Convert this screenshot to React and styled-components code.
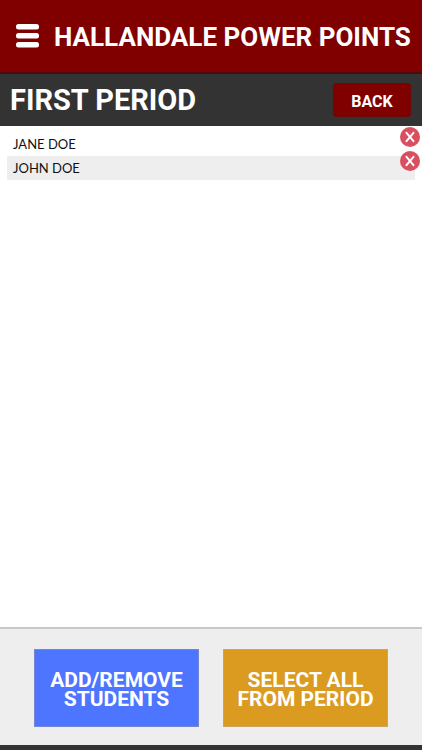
import React from "react";
import styled, { createGlobalStyle } from "styled-components";

const display = 'Roboto, sans-serif';

const GlobalStyle = createGlobalStyle`
  *, *::before, *::after { box-sizing: border-box; }
  body {
    margin: 0;
    background: #fff;
    color: #111;
    font-family: Lato, sans-serif;
  }
  button { margin: 0; cursor: pointer; }
`;

const Page = styled.div`
  display: flex;
  flex-direction: column;
  min-height: 100vh;
`;

const Header = styled.header`
  display: flex;
  align-items: center;
  gap: 14px;
  height: 74px;
  padding: 0 10px 0 16px;
  background: #800000;
  border-bottom: 2px solid #4c0c0c;
  color: #fff;
`;

const MenuButton = styled.button`
  display: flex;
  padding: 0;
  border: 0;
  background: none;
  color: inherit;
`;

const AppTitle = styled.h1`
  margin: 0;
  padding-top: 2px;
  font: bold 26px/36px ${display};
  white-space: nowrap;
`;

const PeriodBar = styled.div`
  display: flex;
  align-items: center;
  justify-content: space-between;
  height: 52px;
  padding: 0 11px 0 10px;
  background: #333;
  color: #fff;
`;

const PeriodTitle = styled.h2`
  margin: 0;
  font: bold 29px/40px ${display};
  white-space: nowrap;
`;

const BackButton = styled.button`
  width: 78px;
  height: 34px;
  padding: 3px 0 0;
  border: 1px solid #6c0808;
  border-radius: 3px;
  background: #800000;
  color: #fff;
  font: bold 16px/20px ${display};
`;

const StudentList = styled.ul`
  flex: 1;
  margin: 0;
  padding: 6px 7px;
  list-style: none;
`;

const StudentRow = styled.li`
  position: relative;
  height: 24px;
  padding: 0 6px;
  font-size: 13px;
  line-height: 24px;

  &:nth-child(even) { background: #eee; }
`;

const RemoveButton = styled.button`
  position: absolute;
  top: -5px;
  right: -5px;
  display: flex;
  padding: 0;
  border: 0;
  border-radius: 50%;
  background: #da4f5f;
  color: #fff;
`;

const Footer = styled.footer`
  display: flex;
  justify-content: center;
  gap: 24px;
  padding: 20px 34px 18px;
  background: #eee;
  border-top: 2px solid #c8c8c8;
  border-bottom: 5px solid #333;
`;

const ActionButton = styled.button`
  flex: 1;
  height: 78px;
  padding: 3px 0 0;
  border: 1px solid ${(p) => p.$edge};
  background: ${(p) => p.$fill};
  color: #fff;
  font: bold 21px/19px ${display};
`;

const MenuIcon = () => (
  <svg width="24" height="24" viewBox="0 0 24 24" fill="currentColor" aria-hidden="true">
    <rect x="0" y="0" width="23" height="5.6" rx="2.5" />
    <rect x="0" y="9" width="23" height="5.6" rx="2.5" />
    <rect x="0" y="18" width="23" height="5.6" rx="2.5" />
  </svg>
);

const CrossIcon = () => (
  <svg width="20" height="20" viewBox="0 0 20 20" fill="none" aria-hidden="true">
    <path d="M6.5 5.8 L13.5 14.2 M13.5 5.8 L6.5 14.2" stroke="currentColor" strokeWidth="2" strokeLinecap="round" />
  </svg>
);

const students = ["JANE DOE", "JOHN DOE"];

export default function App() {
  return (
    <Page>
      <GlobalStyle />
      <Header>
        <MenuButton type="button" aria-label="Menu"><MenuIcon /></MenuButton>
        <AppTitle>HALLANDALE POWER POINTS</AppTitle>
      </Header>
      <PeriodBar>
        <PeriodTitle>FIRST PERIOD</PeriodTitle>
        <BackButton type="button">BACK</BackButton>
      </PeriodBar>
      <StudentList>
        {students.map((name) => (
          <StudentRow key={name}>
            {name}
            <RemoveButton type="button" aria-label={`Remove ${name}`}><CrossIcon /></RemoveButton>
          </StudentRow>
        ))}
      </StudentList>
      <Footer>
        <ActionButton type="button" $fill="#4d75ff" $edge="#7387d4">
          ADD/REMOVE<br />STUDENTS
        </ActionButton>
        <ActionButton type="button" $fill="#da9b20" $edge="#c9a560">
          SELECT ALL<br />FROM PERIOD
        </ActionButton>
      </Footer>
    </Page>
  );
}
